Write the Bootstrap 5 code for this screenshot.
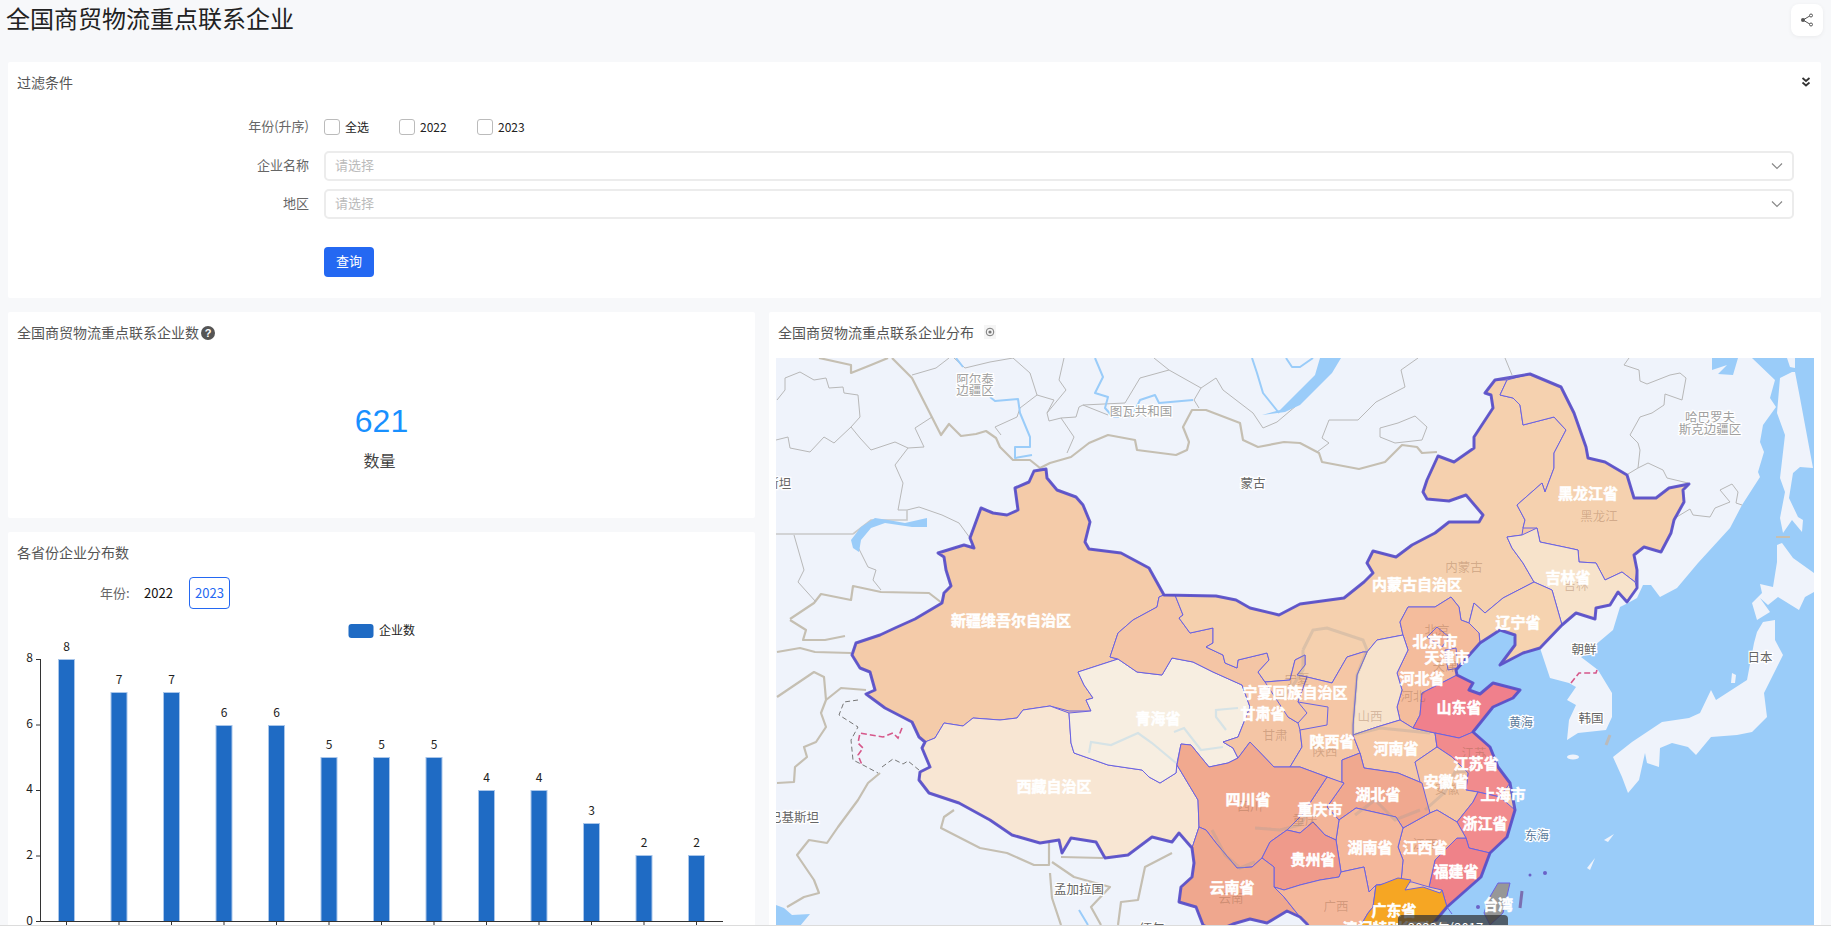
<!DOCTYPE html>
<html lang="zh-CN">
<head>
<meta charset="utf-8">
<title>全国商贸物流重点联系企业</title>
<link href="https://cdn.jsdelivr.net/npm/bootstrap@5.3.0/dist/css/bootstrap.min.css" rel="stylesheet">
<style>
    html, body { height: 926px; overflow: hidden; }
    body { background: #f7f8fa; font-family: "Noto Sans CJK SC", sans-serif; color: #333; }
    .page-wrap { height: 925px; overflow: hidden; padding: 0 10px 0 8px; }
    .page-end { height: 1px; background: #dcdcdc; }
    .page-head { height: 62px; }
    .page-title { font-size: 24px; line-height: 34px; font-weight: 400; margin: 1px 0 0 -2px; color: #222; }
    .share-btn { width: 32px; height: 32px; padding: 0; margin: 4px -2px 0 0; background: #fff; border: 0; border-radius: 8px; box-shadow: 0 1px 4px rgba(0,0,0,.06); }
    .panel { border: 0; border-radius: 2px; background: #fff; }
    .panel-title { font-size: 14px; line-height: 20px; color: #555; padding: 10px 8px 1px 9px; }
    .filter-panel { height: 236px; }
    .fold-icon { position: absolute; right: 10px; top: 15px; }
    .fld-row { display: flex; align-items: center; }
    .fld-label { width: 301px; margin-right: 15px; padding-bottom: 3px; text-align: right; font-size: 13px; color: #666; }
    .check-row { height: 26px; margin-top: 21px; margin-bottom: 11px; }
    .check-item { display: flex; align-items: center; margin: 0; font-size: 12px; color: #222; }
    .check-item .form-check-input { width: 16px; height: 16px; margin: 0 5px 0 0; border: 1px solid #bbb; border-radius: 3px; }
    .check-all { width: 75px; }
    .check-y { width: 78px; }
    .pick-box { flex: 1; height: 30px; padding: 0 9px; display: flex; align-items: center; justify-content: space-between; border: 2px solid #ececec; border-radius: 5px; margin-right: 27px; font-size: 13px; color: #bbb; }
    .pick-box span { padding-bottom: 3px; }
    .pick-row { margin-bottom: 8px; }
    .query-btn { width: 50px; height: 30px; margin: 20px 0 0 316px; padding: 0 0 2px; font-size: 13px; background: #2468f2; border: 0; border-radius: 4px; }
    .main-grid { display: flex; gap: 14px; margin-top: 14px; }
    .left-col { width: 747px; display: flex; flex-direction: column; gap: 14px; }
    .right-col { flex: 1; height: 620px; }
    .count-panel { height: 206px; }
    .q-mark { width: 14px; height: 14px; margin-left: 2px; background: #555; color: #fff; font-size: 11px; font-weight: 700; line-height: 14px; text-align: center; display: inline-block; border-radius: 50%; vertical-align: 1px; font-family: "Liberation Sans", sans-serif; }
    .target-mark { margin-left: 10px; }
    .count-num { margin-top: 58px; font: 32px/40px "Liberation Sans", sans-serif; color: #1890ff; text-align: center; }
    .count-name { margin-top: 7px; padding-right: 4px; font-size: 16px; line-height: 24px; color: #444; text-align: center; }
    .bars-panel { height: 400px; }
    .year-row { display: flex; align-items: center; margin: 14px 0 0 92px; height: 32px; font-size: 13px; }
    .year-tag { width: 44px; color: #666; }
    .year-off { width: 45px; color: #111; }
    .year-on { width: 41px; height: 32px; padding: 0; font-size: 13px; color: #2468f2; border: 1px solid #2468f2; border-radius: 4px; background: #fff; }
    .bars-svg { display: block; margin-top: 6px; }
    .bars-svg text { font-size: 12px; font-family: "Noto Sans CJK SC", sans-serif; fill: #222; }
    .map-box { position: relative; margin: 15px 7px 0 7px; height: 568px; overflow: hidden; }
    .map-svg { display: block; }
    .map-svg text { font-family: "Noto Sans CJK SC", sans-serif; text-anchor: middle; dominant-baseline: central; }
    .pv { stroke: #6a62e2; stroke-width: 1; stroke-linejoin: round; }
    .outer { fill: none; stroke: #5a50c8; stroke-width: 3; stroke-linejoin: round; stroke-opacity: .92; }
    .nation { fill: none; stroke: #c5bfb2; stroke-width: 2.2; stroke-linejoin: round; }
    .inner-line { fill: none; stroke: #b8b8b8; stroke-width: 1; stroke-linejoin: round; }
    .river { fill: none; stroke: #9accf9; stroke-width: 2; stroke-linejoin: round; }
    .stream { fill: none; stroke: #d6e3e6; stroke-width: 2.2; }
    .grey-stream { fill: none; stroke: #9a9a9a; stroke-opacity: .28; stroke-width: 3; }
    .red-dash { fill: none; stroke: #d6578a; stroke-width: 1.6; stroke-dasharray: 6 3; }
    .grey-dash { fill: none; stroke: #777; stroke-width: 1; stroke-dasharray: 5 3; }
    .place { font-size: 12.5px; fill: #666; stroke: #fff; stroke-width: 2.5; paint-order: stroke; }
    .place-soft { font-size: 12.5px; fill: #a0a0a0; stroke: #fff; stroke-width: 2.5; paint-order: stroke; }
    .sea-name { font-size: 12px; fill: #5d7b9c; stroke: #fff; stroke-width: 2.5; paint-order: stroke; }
    .pv-soft { font-size: 12.5px; fill: #8a5a3c; fill-opacity: .32; }
    .pv-name { font-size: 15px; font-weight: 700; fill: #fff; stroke: #fff; stroke-width: .5; }
    .map-tip { position: absolute; left: 622px; top: 557px; width: 110px; height: 40px; padding: 4px 10px; border-radius: 4px; background: rgba(50,50,50,.72); color: #fff; font-size: 13px; line-height: 18px; white-space: nowrap; }
</style>
</head>
<body>
<div class="page-wrap">
    <div class="page-head d-flex justify-content-between align-items-start">
        <h1 class="page-title">全国商贸物流重点联系企业</h1>
        <button class="share-btn d-flex align-items-center justify-content-center" type="button" aria-label="分享">
            <svg width="14" height="14" viewBox="0 0 14 14"><path d="M10.500 2.500 3 7l7.500 4.500" fill="none" stroke="#555" stroke-width="1"/><circle cx="3" cy="7" r="2" fill="#555"/><circle cx="11" cy="2.500" r="1.500" fill="#fff" stroke="#555"/><circle cx="11" cy="11.500" r="1.500" fill="#fff" stroke="#555"/></svg>
        </button>
    </div>

    <div class="card panel filter-panel position-relative">
        <div class="panel-title">过滤条件</div>
        <svg class="fold-icon" width="10" height="10" viewBox="0 0 10 10"><path d="M1.500 1 5 4l3.500-3M1.500 5.500 5 8.500l3.500-3" fill="none" stroke="#333" stroke-width="1.800"/></svg>
        <form>
            <div class="fld-row check-row">
                <div class="fld-label">年份(升序)</div>
                <label class="check-item check-all"><input class="form-check-input" type="checkbox">全选</label>
                <label class="check-item check-y"><input class="form-check-input" type="checkbox">2022</label>
                <label class="check-item"><input class="form-check-input" type="checkbox">2023</label>
            </div>
            <div class="fld-row pick-row">
                <div class="fld-label">企业名称</div>
                <div class="pick-box"><span>请选择</span><svg width="12" height="8" viewBox="0 0 12 8"><path d="M1 1.500 6 6.500l5-5" fill="none" stroke="#888" stroke-width="1.200"/></svg></div>
            </div>
            <div class="fld-row pick-row">
                <div class="fld-label">地区</div>
                <div class="pick-box"><span>请选择</span><svg width="12" height="8" viewBox="0 0 12 8"><path d="M1 1.500 6 6.500l5-5" fill="none" stroke="#888" stroke-width="1.200"/></svg></div>
            </div>
            <button class="btn btn-primary query-btn" type="button">查询</button>
        </form>
    </div>

    <div class="main-grid">
        <div class="left-col">
            <div class="card panel count-panel">
                <div class="panel-title">全国商贸物流重点联系企业数<span class="q-mark">?</span></div>
                <div class="count-num">621</div>
                <div class="count-name">数量</div>
            </div>
            <div class="card panel bars-panel">
                <div class="panel-title">各省份企业分布数</div>
                <div class="year-row">
                    <span class="year-tag">年份:</span>
                    <span class="year-off">2022</span>
                    <button class="year-on" type="button">2023</button>
                </div>
                <svg class="bars-svg" width="747" height="311" viewBox="8 615 747 311">
                    <rect x="348.500" y="624" width="25" height="14" rx="3" fill="#1f6bc4"/>
                    <text x="379" y="635">企业数</text>
                    <g fill="#1f6bc4" stroke="#a9c6ea" stroke-width="1">
                        <rect x="58.500" y="659.500" width="16" height="262"/>
                        <rect x="111" y="692.500" width="16" height="229"/>
                        <rect x="163.500" y="692.500" width="16" height="229"/>
                        <rect x="216" y="725.500" width="16" height="196"/>
                        <rect x="268.500" y="725.500" width="16" height="196"/>
                        <rect x="321" y="757.500" width="16" height="164"/>
                        <rect x="373.500" y="757.500" width="16" height="164"/>
                        <rect x="426" y="757.500" width="16" height="164"/>
                        <rect x="478.500" y="790.500" width="16" height="131"/>
                        <rect x="531" y="790.500" width="16" height="131"/>
                        <rect x="583.500" y="823.500" width="16" height="98"/>
                        <rect x="636" y="855.500" width="16" height="66"/>
                        <rect x="688.500" y="855.500" width="16" height="66"/>
                    </g>
                    <g text-anchor="middle">
                        <text x="66.500" y="651">8</text><text x="119" y="684">7</text><text x="171.500" y="684">7</text>
                        <text x="224" y="717">6</text><text x="276.500" y="717">6</text><text x="329" y="749">5</text>
                        <text x="381.500" y="749">5</text><text x="434" y="749">5</text><text x="486.500" y="782">4</text>
                        <text x="539" y="782">4</text><text x="591.500" y="815">3</text><text x="644" y="847">2</text>
                        <text x="696.500" y="847">2</text>
                    </g>
                    <g text-anchor="end">
                        <text x="33" y="662">8</text><text x="33" y="728">6</text><text x="33" y="793">4</text>
                        <text x="33" y="859">2</text><text x="33" y="925">0</text>
                    </g>
                    <path d="M40.500 659v262.500H723M36 659.500h4.500M36 725h4.500M36 790.500h4.500M36 856h4.500M36 921.500h4.500" fill="none" stroke="#333" stroke-width="1"/>
                    <path d="M66.500 922v5M119 922v5M171.500 922v5M224 922v5M276.500 922v5M329 922v5M381.500 922v5M434 922v5M486.500 922v5M539 922v5M591.500 922v5M644 922v5M696.500 922v5" stroke="#333" stroke-width="1"/>
                </svg>
            </div>
        </div>

        <div class="right-col">
            <div class="card panel h-100">
                <div class="panel-title d-flex align-items-center">全国商贸物流重点联系企业分布
                    <svg class="target-mark" width="12" height="14" viewBox="0 0 12 14"><rect width="12" height="14" fill="#f5f5f5"/><circle cx="6" cy="7" r="3.800" fill="none" stroke="#777"/><circle cx="6" cy="7" r="1.600" fill="#777"/></svg>
                </div>
                <div class="map-box">
                    <svg class="map-svg" width="1038" height="568" viewBox="776 358 1038 568">
                        <defs>
                            <polygon id="cn" points="915,619 942,603 944,593 951,586 946,570 944,557 938,553 964,545 974,548 970,538 981,508 993,513 1007,515 1018,510 1015,488 1029,482 1034,471 1046,469 1047,478 1057,490 1076,497 1083,505 1090,522 1085,542 1089,549 1121,553 1149,568 1164,595 1216,596 1236,600 1250,608 1279,615 1300,604 1344,598 1364,582 1373,573 1367,563 1373,551 1396,557 1412,545 1435,533 1449,522 1479,522 1483,515 1466,495 1449,501 1427,499 1423,492 1427,480 1438,456 1454,462 1474,448 1474,437 1493,408 1491,395 1485,393 1495,380 1530,374 1561,387 1574,413 1586,447 1588,458 1605,462 1627,475 1634,498 1656,498 1669,488 1689,484 1683,490 1684,502 1674,520 1671,533 1661,552 1644,547 1634,555 1637,570 1637,588 1627,602 1618,592 1610,605 1596,608 1595,619 1576,613 1562,625 1540,648 1523,653 1500,665 1515,645 1515,635 1500,630 1480,643 1456,670 1457,675 1473,683 1469,690 1480,694 1493,683 1520,690 1513,698 1493,707 1473,732 1490,747 1498,767 1510,783 1515,810 1507,837 1490,853 1481,877 1447,907 1432,925 1425,932 1312,932 1307,924 1300,917 1287,911 1267,923 1250,919 1233,924 1215,932 1203,925 1196,907 1179,902 1181,887 1192,877 1194,863 1192,848 1179,833 1172,842 1152,837 1128,855 1105,858 1096,842 1071,838 1062,853 1059,840 1040,843 1012,835 990,820 959,803 929,793 919,780 920,772 930,767 922,748 925,742 919,737 912,722 885,708 866,694 875,690 870,672 860,668 852,655 856,643 880,635 895,628"/>
                        </defs>

                        <rect x="776" y="358" width="1038" height="568" fill="#eff3fb"/>
                        <polygon fill="#9accf9" points="1752,358 1814,358 1814,926 1430,926 1440,780 1450,670 1500,620 1540,648 1550,678 1569,683 1576,687 1567,700 1576,705 1569,720 1567,740 1578,733 1606,730 1612,717 1612,693 1598,670 1581,657 1613,630 1620,607 1628,603 1637,598 1643,585 1651,585 1660,597 1677,588 1698,563 1730,528 1742,505 1760,477 1758,472 1764,452 1760,442 1763,425 1776,407 1770,398 1775,380"/>
                        <polygon fill="#9accf9" points="1712,358 1738,358 1733,375 1718,374 1727,365 1712,370"/>
                        <polygon fill="#9accf9" points="776,905 784,908 792,915 810,914 800,926 776,926"/>
                        <g fill="#eff3fb">
                            <polygon points="1780,378 1792,372 1795,372 1800,398 1813,468 1800,467 1793,473 1789,498 1798,517 1803,520 1802,532 1792,520 1783,533 1780,518 1785,492 1780,478 1785,435 1777,413"/>
                            <polygon points="1787,358 1795,358 1795,368 1790,367"/>
                            <polygon points="1777,545 1782,543 1793,558 1814,573 1814,592 1805,597 1799,610 1778,597 1768,605 1760,598 1770,612 1757,620 1752,603 1762,593 1760,584 1773,587 1777,562"/>
                            <polygon points="1757,632 1763,622 1775,620 1775,640 1783,655 1774,673 1764,693 1767,717 1752,732 1737,735 1711,737 1696,755 1688,747 1672,743 1660,748 1659,767 1647,763 1645,753 1639,780 1628,793 1622,777 1613,757 1632,742 1662,722 1689,718 1700,713 1711,690 1716,700 1747,680 1754,643"/>
                            <ellipse cx="1573" cy="757" rx="6" ry="2.500"/>
                            <polygon points="1732,673 1736,675 1735,683 1731,683"/>
                            <polygon points="1604,840 1614,834 1608,842"/>
                            <polygon points="1587,868 1595,858 1590,870"/>
                        </g>

                        <path class="nation" d="M892 358 912 378 941 435 949 424 961 436 976 434 986 431 996 438 1000 447 1013 460 1030 460 1040 468 1050 463 1071 457 1089 443 1108 435 1135 440 1137 450 1176 455 1187 450 1189 442 1183 427 1192 410 1206 410 1240 423 1243 440 1258 447 1284 442 1300 443 1319 453 1322 462 1359 469 1385 462 1402 445 1417 447 1422 453 1437 452"/>
                        <path class="nation" d="M819 358 851 365 851 373 871 365 888 358"/>
                        <path class="nation" d="M790 619 814 603 821 594 851 600 853 586 881 592 929 593 942 603"/>
                        <path class="nation" d="M777 697 814 672 824 677 826 700 841 688 866 690M826 700 821 713 826 727 816 742 804 747 807 757 795 767 794 782 777 783"/>
                        <path class="nation" d="M880 773 868 783 858 800 838 827 827 843 809 840 797 855 814 880 819 893 804 897 787 907"/>
                        <path class="nation" d="M954 810 944 817 941 828 980 848 1007 853 1034 865 1049 865 1049 843M1052 862 1074 877 1110 887 1091 907 1101 925M1061 857 1103 858M1050 873 1052 898 1061 925M1172 853 1145 867 1138 900 1121 902 1118 925"/>
                        <path class="nation" d="M790 620 806 630 803 640 825 640 845 636M777 652 800 648 815 652 851 653"/>

                        <path class="inner-line" d="M777 400 785 390 785 378 800 372 814 380 826 378 829 388 843 387 844 393 858 395 860 417 851 427 860 438 871 450 895 442 908 448 924 447 915 428 932 417M776 440 788 437 790 448 810 452 824 437 834 443 851 427"/>
                        <path class="inner-line" d="M908 448 895 465 903 483 898 510 907 510 919 507 942 515 959 523 970 538M794 535 804 570 798 582 816 602M858 547 868 567 876 570 873 580 881 590"/>
                        <path class="inner-line" d="M912 375 936 368 949 358M954 358 965 368 990 362 1013 358 1030 373 1037 395 1054 400 1047 413 1049 421 1061 418 1074 437 1067 453M1037 395 1020 408 1017 417 995 427 1001 435M1064 358 1059 380 1066 390 1047 413M1154 358 1169 370 1140 378 1125 403 1083 405 1079 407 1076 417 1061 418M1083 405 1108 415M1169 370 1201 388 1216 378 1223 390 1253 413 1263 428 1277 422 1303 400 1329 358M1201 388 1194 400 1199 408"/>
                        <path class="inner-line" d="M1418 358 1401 370 1405 387 1376 402 1358 420 1329 420 1322 438 1329 443 1317 452M1380 428 1398 423 1415 416 1427 427 1422 440 1395 443 1380 437ZM1505 358 1512 375"/>
                        <path class="inner-line" d="M1629 358 1624 365 1639 370 1640 381 1647 384 1670 375 1680 373 1686 378 1682 400 1665 394 1664 405 1652 413 1640 417 1630 435 1638 443 1640 450 1638 468 1628 474M1638 468 1648 463 1663 470 1667 478 1688 483M1675 518 1690 509 1693 515 1710 517 1715 508 1730 502 1720 490 1732 484 1738 492 1736 503 1742 505"/>
                        <path d="M776 534H853M853 534 871 520H907V510" fill="none" stroke="#c9c9c9" stroke-width="1.600"/>

                        <path class="river" d="M956 358 963 367M990 397 995 401 1018 399 1020 413 1030 437 1030 447 1015 447 1015 458 1032 455"/>
                        <path class="river" d="M1095 358 1103 377 1095 393 1108 397 1105 408 1113 417 1132 417 1140 400 1155 395 1159 403 1193 400"/>
                        <path class="river" d="M1252 358 1257 373 1263 393 1279 413M1286 358 1292 367 1300 367 1313 358M1079 910 1088 925"/>
                        <polygon fill="#9accf9" points="851,540 861,527 875,518 888,520 905,523 927,518 927,527 912,527 885,523 871,528 861,540 859,552 853,548"/>
                        <polygon fill="#9accf9" points="1262,415 1285,412 1300,405 1332,373 1341,358 1320,358 1315,375 1300,390 1280,410"/>

                        <path class="red-dash" d="M902 728 898 738 893 733 883 737 871 735 860 733 858 743 863 748 858 755 862 765M1571 683 1579 673 1596 673 1597 670"/>
                        <path class="grey-dash" d="M858 700 844 702 839 715 858 727 851 740 853 760 863 765 878 773M882 767 893 759 903 764 908 761 919 770"/>
                        <path d="M1776 537H1790" stroke="#c5bfb2" stroke-width="2"/>
                        <path d="M1610 735 1606 745" stroke="#bbb" stroke-width="3"/>

                        <use href="#cn" fill="#f5c8a7"/>
                        <g class="pv">
                            <polygon fill="#f4cba9" points="915,619 942,603 944,593 951,586 946,570 944,557 938,553 964,545 974,548 970,538 981,508 993,513 1007,515 1018,510 1015,488 1029,482 1034,471 1046,469 1047,478 1057,490 1076,497 1083,505 1090,522 1085,542 1089,549 1121,553 1149,568 1164,595 1159,597 1157,607 1133,620 1118,633 1110,657 1118,659 1078,672 1084,685 1093,698 1086,700 1091,711 1069,711 1050,706 1023,710 1017,718 1000,720 973,718 963,726 944,723 935,738 925,742 919,737 912,722 885,708 866,694 875,690 870,672 860,668 852,655 856,643 880,635 895,628"/>
                            <polygon fill="#f8e6d3" points="925,742 935,738 944,723 963,726 973,718 1000,720 1017,718 1023,710 1050,706 1069,713 1071,743 1074,753 1108,765 1142,770 1149,777 1160,783 1176,773 1177,765 1192,790 1198,800 1199,827 1192,848 1179,833 1172,842 1152,837 1128,855 1105,858 1096,842 1071,838 1062,853 1059,840 1040,843 1012,835 990,820 959,803 929,793 919,780 920,772 930,767 922,748"/>
                            <polygon fill="#f7eee1" points="1078,672 1118,659 1137,672 1162,675 1172,658 1193,662 1213,672 1242,685 1250,707 1238,737 1223,742 1233,748 1238,758 1228,763 1209,767 1191,745 1181,744 1177,763 1176,773 1160,783 1149,777 1142,770 1108,765 1074,753 1071,743 1069,713 1091,711 1086,700 1093,698 1084,685"/>
                            <polygon fill="#f4c5a5" points="1164,595 1175,595 1183,615 1179,618 1190,633 1213,628 1213,643 1206,647 1223,655 1225,663 1237,668 1238,660 1267,653 1269,660 1258,672 1265,682 1290,680 1288,717 1298,723 1300,730 1302,747 1290,767 1274,767 1250,742 1238,758 1233,748 1223,742 1238,737 1250,707 1242,685 1213,672 1193,662 1172,658 1162,675 1137,672 1118,659 1110,657 1118,633 1133,620 1157,607 1159,597"/>
                            <polygon fill="#f5d0ae" points="1164,595 1216,596 1236,600 1250,608 1279,615 1300,604 1344,598 1364,582 1373,573 1367,563 1373,551 1396,557 1412,545 1435,533 1449,522 1479,522 1483,515 1466,495 1449,501 1427,499 1423,492 1427,480 1438,456 1454,462 1474,448 1474,437 1493,408 1491,395 1485,393 1495,380 1507,380 1500,395 1513,398 1520,405 1523,425 1554,417 1566,430 1554,453 1554,468 1545,492 1542,483 1517,505 1525,520 1523,528 1522,535 1507,537 1512,548 1523,563 1534,582 1503,598 1485,613 1474,603 1469,623 1461,620 1459,607 1451,597 1435,607 1408,607 1400,622 1403,635 1377,640 1367,652 1363,652 1347,657 1332,683 1307,677 1297,675 1305,665 1305,655 1295,660 1290,680 1265,682 1258,672 1269,660 1267,653 1238,660 1237,668 1225,663 1223,655 1206,647 1213,643 1213,628 1190,633 1179,618 1183,615 1175,595"/>
                            <polygon fill="#f5d1af" points="1507,380 1530,374 1561,387 1574,413 1586,447 1588,458 1605,462 1627,475 1634,498 1656,498 1669,488 1689,484 1683,490 1684,502 1674,520 1671,533 1661,552 1644,547 1634,555 1637,570 1635,582 1622,572 1605,580 1596,563 1579,562 1578,550 1564,547 1540,542 1537,528 1523,528 1525,520 1517,505 1542,483 1545,492 1554,468 1554,453 1566,430 1554,417 1523,425 1520,405 1513,398 1500,395"/>
                            <polygon fill="#f7e3cb" points="1534,582 1523,563 1512,548 1507,537 1522,535 1537,528 1540,542 1564,547 1578,550 1579,562 1596,563 1605,580 1622,572 1635,582 1637,588 1627,602 1618,592 1610,605 1596,608 1595,619 1576,613 1562,625 1552,590"/>
                            <polygon fill="#f6d3b0" points="1469,623 1474,603 1485,613 1503,598 1534,582 1552,590 1562,625 1540,648 1523,653 1500,665 1515,645 1515,635 1500,630 1480,643 1479,633"/>
                            <polygon fill="#f4bc9c" points="1403,635 1400,622 1408,607 1435,607 1451,597 1459,607 1461,620 1469,623 1479,633 1480,643 1456,670 1457,675 1422,693 1420,715 1413,728 1400,720 1397,707 1402,690 1397,673 1408,650"/>
                            <polygon fill="#f2ab90" points="1427,637 1437,627 1449,637 1442,647"/>
                            <polygon fill="#f3b79a" points="1445,650 1456,648 1458,668 1448,670"/>
                            <polygon fill="#f7e3cc" points="1367,652 1377,640 1403,635 1408,650 1397,673 1402,690 1397,707 1400,720 1377,727 1353,735 1353,725 1357,675"/>
                            <polygon fill="#f5c5a3" points="1265,682 1290,680 1295,660 1305,655 1305,665 1297,675 1307,677 1298,702 1307,713 1298,723 1288,717"/>
                            <polygon fill="#f5c6a5" points="1363,652 1367,652 1357,675 1353,725 1353,735 1360,753 1342,760 1342,783 1327,777 1300,767 1290,767 1302,747 1300,730 1327,725 1328,707 1298,702 1307,677 1332,683 1347,657"/>
                            <polygon fill="#f5c8a7" points="1353,735 1377,727 1400,720 1413,728 1435,733 1437,747 1415,762 1422,783 1398,773 1364,768 1360,753"/>
                            <polygon fill="#f0808c" points="1457,675 1473,683 1469,690 1480,694 1493,683 1520,690 1513,698 1493,707 1473,732 1459,738 1435,733 1413,728 1420,715 1422,693"/>
                            <polygon fill="#f18b8d" points="1435,733 1459,738 1473,732 1490,747 1498,767 1510,783 1500,797 1478,792 1466,790 1468,773 1452,757 1437,747"/>
                            <polygon fill="#f4c4a2" points="1437,747 1452,757 1468,773 1466,790 1478,792 1473,802 1457,822 1437,810 1430,813 1422,790 1415,762"/>
                            <polygon fill="#f18b8d" points="1478,792 1500,797 1515,810 1507,837 1490,853 1469,848 1466,838 1457,822 1473,802"/>
                            <polygon fill="#ef8289" points="1457,838 1466,838 1469,848 1490,853 1481,877 1447,907 1442,890 1429,887 1435,860"/>
                            <polygon fill="#f4b79a" points="1430,813 1437,810 1457,822 1466,838 1457,838 1435,860 1429,887 1412,882 1401,882 1403,860 1398,847 1403,828"/>
                            <polygon fill="#f0a88f" points="1342,760 1360,753 1364,768 1398,773 1422,783 1430,813 1403,828 1396,817 1356,808 1339,820 1327,807 1344,783 1342,783"/>
                            <polygon fill="#f4b79a" points="1339,820 1356,808 1396,817 1403,828 1398,847 1403,860 1401,882 1376,885 1369,892 1364,867 1341,872 1336,840"/>
                            <polygon fill="#f3b498" points="1327,777 1344,783 1327,807 1339,820 1336,840 1325,835 1313,822 1300,833 1287,830 1302,815"/>
                            <polygon fill="#f1a98f" points="1177,765 1181,744 1191,745 1209,767 1228,763 1238,758 1250,742 1274,767 1290,767 1300,767 1327,777 1302,815 1287,830 1270,842 1262,858 1252,867 1237,868 1216,843 1206,830 1199,827 1198,800 1192,790"/>
                            <polygon fill="#ef9a8b" points="1300,833 1313,822 1325,835 1336,840 1341,872 1339,877 1320,880 1300,885 1284,890 1274,887 1274,867 1262,858 1270,842 1287,830"/>
                            <polygon fill="#efa78e" points="1192,848 1199,827 1206,830 1216,843 1237,868 1252,867 1262,858 1274,867 1274,887 1284,897 1292,907 1300,917 1287,911 1267,923 1250,919 1233,924 1215,932 1203,925 1196,907 1179,902 1181,887 1192,877 1194,863"/>
                            <polygon fill="#f4b79a" points="1274,887 1284,890 1300,885 1320,880 1339,877 1341,872 1364,867 1369,892 1376,885 1373,907 1368,913 1357,932 1312,932 1307,924 1300,917 1292,907 1284,897"/>
                            <polygon fill="#f6a623" points="1376,885 1380,885 1398,878 1411,880 1405,890 1423,887 1440,893 1442,890 1447,907 1432,925 1425,932 1357,932 1368,913 1373,907"/>
                            <polygon fill="#979797" points="1510,883 1498,883 1488,900 1484,913 1490,925 1503,913"/>
                        </g>
                        <use href="#cn" class="outer"/>
                        <path d="M1447 907 1452 914" stroke="#6a62e2"/>
                        <path d="M1522 891 1520 908" stroke="#7b6fb0" stroke-width="3"/>
                        <g fill="#6a62c8"><circle cx="1530" cy="875" r="1.500"/><circle cx="1545" cy="873" r="2"/><circle cx="1478" cy="907" r="2"/></g>

                        <path class="grey-stream" d="M1303 650 1313 630 1327 628 1363 640 1367 650 1357 675 1353 725 1353 735M1303 650 1303 670 1290 690 1277 700M1353 735 1380 728 1400 730 1430 733M1470 771 1455 772 1445 792 1425 810M1355 815 1375 800 1395 820 1420 810M1255 828 1280 830 1300 825 1310 810M1212 830 1225 855 1240 868 1255 862"/>
                        <path class="stream" d="M1089 753 1091 742 1111 745 1138 733 1152 743 1176 763M1174 732 1184 728 1201 750 1223 747M1226 730 1216 717 1216 710 1238 708"/>

                        <text class="place-soft" x="975" y="378">阿尔泰</text>
                        <text class="place-soft" x="975" y="389">边疆区</text>
                        <text class="place-soft" x="1141" y="410">图瓦共和国</text>
                        <text class="place-soft" x="1710" y="416">哈巴罗夫</text>
                        <text class="place-soft" x="1710" y="428">斯克边疆区</text>
                        <text class="place" x="1253" y="482">蒙古</text>
                        <text class="place" x="760" y="482">哈萨克斯坦</text>
                        <text class="place" x="794" y="816">巴基斯坦</text>
                        <text class="place" x="1079" y="888">孟加拉国</text>
                        <text class="place" x="1152" y="927">缅甸</text>
                        <text class="place" x="1584" y="648">朝鲜</text>
                        <text class="place" x="1591" y="717">韩国</text>
                        <text class="place" x="1760" y="656">日本</text>
                        <text class="sea-name" x="1521" y="721">黄海</text>
                        <text class="sea-name" x="1537" y="834">东海</text>

                        <g class="pv-labels">
                            <text class="pv-soft" x="1599" y="515">黑龙江</text>
                            <text class="pv-soft" x="1464" y="566">内蒙古</text>
                            <text class="pv-soft" x="1576" y="584">吉林</text>
                            <text class="pv-soft" x="1437" y="629">北京</text>
                            <text class="pv-soft" x="1370" y="715">山西</text>
                            <text class="pv-soft" x="1413" y="695">河北</text>
                            <text class="pv-soft" x="1325" y="750">陕西</text>
                            <text class="pv-soft" x="1275" y="734">甘肃</text>
                            <text class="pv-soft" x="1474" y="752">江苏</text>
                            <text class="pv-soft" x="1447" y="788">安徽</text>
                            <text class="pv-soft" x="1336" y="905">广西</text>
                            <text class="pv-soft" x="1231" y="897">云南</text>
                            <text class="pv-soft" x="1250" y="805">四川</text>
                            <text class="pv-soft" x="1305" y="819">重庆</text>
                            <text class="pv-soft" x="1425" y="843">江西</text>
                            <text class="pv-soft" x="1445" y="665">天津</text>
                            <text class="pv-soft" x="1297" y="678">宁夏</text>
                        </g>

                        <text class="pv-name" x="1011" y="619">新疆维吾尔自治区</text>
                        <text class="pv-name" x="1054" y="785">西藏自治区</text>
                        <text class="pv-name" x="1158" y="717">青海省</text>
                        <text class="pv-name" x="1248" y="798">四川省</text>
                        <text class="pv-name" x="1232" y="886">云南省</text>
                        <text class="pv-name" x="1263" y="712">甘肃省</text>
                        <text class="pv-name" x="1295" y="691">宁夏回族自治区</text>
                        <text class="pv-name" x="1417" y="583">内蒙古自治区</text>
                        <text class="pv-name" x="1588" y="492">黑龙江省</text>
                        <text class="pv-name" x="1568" y="576">吉林省</text>
                        <text class="pv-name" x="1518" y="621">辽宁省</text>
                        <text class="pv-name" x="1435" y="640">北京市</text>
                        <text class="pv-name" x="1447" y="656">天津市</text>
                        <text class="pv-name" x="1422" y="677">河北省</text>
                        <text class="pv-name" x="1459" y="706">山东省</text>
                        <text class="pv-name" x="1332" y="740">陕西省</text>
                        <text class="pv-name" x="1396" y="747">河南省</text>
                        <text class="pv-name" x="1476" y="762">江苏省</text>
                        <text class="pv-name" x="1446" y="780">安徽省</text>
                        <text class="pv-name" x="1503" y="793">上海市</text>
                        <text class="pv-name" x="1378" y="793">湖北省</text>
                        <text class="pv-name" x="1320" y="808">重庆市</text>
                        <text class="pv-name" x="1485" y="822">浙江省</text>
                        <text class="pv-name" x="1370" y="846">湖南省</text>
                        <text class="pv-name" x="1425" y="846">江西省</text>
                        <text class="pv-name" x="1313" y="858">贵州省</text>
                        <text class="pv-name" x="1456" y="870">福建省</text>
                        <text class="pv-name" x="1394" y="909">广东省</text>
                        <text class="pv-name" x="1498" y="903">台湾</text>
                        <text class="pv-name" x="1395" y="927">澳门特别行政区</text>
                    </svg>
                    <div class="map-tip">2023年(2017</div>
                </div>
            </div>
        </div>
    </div>
</div>
<div class="page-end"></div>
<script src="https://cdn.jsdelivr.net/npm/bootstrap@5.3.0/dist/js/bootstrap.bundle.min.js"></script>
</body>
</html>
